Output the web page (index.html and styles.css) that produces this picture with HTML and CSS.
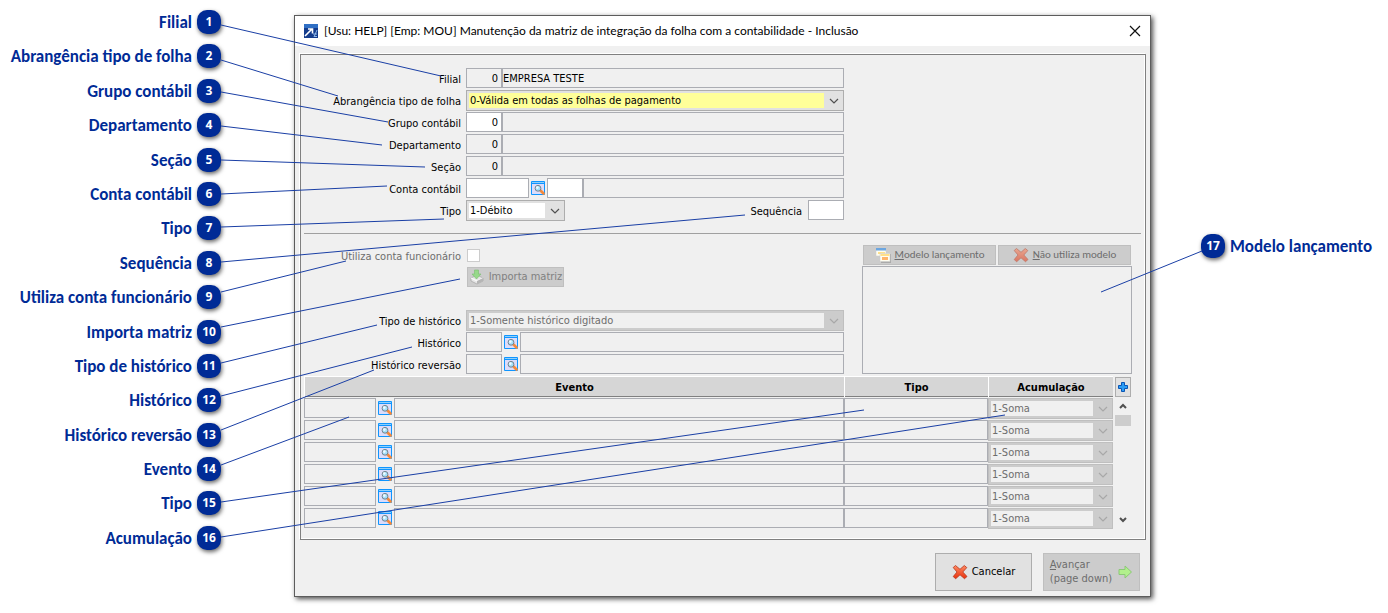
FILE: index.html
```html
<!DOCTYPE html>
<html lang="pt-BR">
<head>
<meta charset="utf-8">
<title>Manutenção da matriz de integração da folha com a contabilidade</title>
<link rel="stylesheet" href="styles.css">
</head>
<body>
<svg class="symbols" aria-hidden="true">
  <defs>
    <linearGradient id="red" x1="0" y1="0" x2="0" y2="1"><stop offset="0" stop-color="#ff8a62"/><stop offset="1" stop-color="#e8300c"/></linearGradient>
  </defs>
  <symbol id="search" viewBox="0 0 14 14">
    <rect x="0" y="0" width="14" height="14" rx="1" fill="#0f95ff"/>
    <rect x="1" y="1" width="12" height="1" fill="#8fd0fb"/>
    <rect x="1" y="3" width="12" height="10" fill="#dcdcfa"/>
    <path d="M9.500 9.500l3 3" stroke="#f58a3a" stroke-width="2.600" stroke-linecap="round"/>
    <circle cx="7" cy="7.300" r="2.900" fill="#a5e0fa" stroke="#76828c"/>
    <circle cx="6.300" cy="6.600" r="1.300" fill="#effbff"/>
  </symbol>
  <symbol id="chevron" viewBox="0 0 10 6"><path d="M1 1l4 4 4-4" fill="none" stroke="currentColor" stroke-width="1.200"/></symbol>
  <symbol id="cross" viewBox="0 0 16 16">
    <path d="M3.500 1.500L8 5.300 12.300 1.500 14.800 3.600 10.800 8 15 12.500 12.500 14.700 8 10.800 3.700 14.700 1.200 12.600 5 8 1.200 3.500z" fill="url(#red)" stroke="#b5361c" stroke-width=".8" stroke-linejoin="round"/>
  </symbol>
</svg>

<main class="stage">
  <ol class="callouts">
    <li><span>Filial</span><b>1</b></li>
    <li><span>Abrangência tipo de folha</span><b>2</b></li>
    <li><span>Grupo contábil</span><b>3</b></li>
    <li><span>Departamento</span><b>4</b></li>
    <li><span>Seção</span><b>5</b></li>
    <li><span>Conta contábil</span><b>6</b></li>
    <li><span>Tipo</span><b>7</b></li>
    <li><span>Sequência</span><b>8</b></li>
    <li><span>Utiliza conta funcionário</span><b>9</b></li>
    <li><span>Importa matriz</span><b>10</b></li>
    <li><span>Tipo de histórico</span><b>11</b></li>
    <li><span>Histórico</span><b>12</b></li>
    <li><span>Histórico reversão</span><b>13</b></li>
    <li><span>Evento</span><b>14</b></li>
    <li><span>Tipo</span><b>15</b></li>
    <li><span>Acumulação</span><b>16</b></li>
  </ol>

  <section class="dialog">
    <header class="titlebar">
      <svg class="app-icon" viewBox="0 0 14 14" aria-hidden="true">
        <rect width="14" height="14" fill="#143c8c"/><rect width="14" height="4" fill="#2f6fc4"/>
        <path d="M1 12l6.500-6.500M4 5h4.500v4.500" fill="none" stroke="#fff" stroke-width="1.600"/>
        <path d="M10 13l3-7M9 10h4M10 12.500h3" stroke="#8fb7e8" fill="none"/>
      </svg>
      <h1>[Usu: HELP] [Emp: MOU] Manutenção da matriz de integração da folha com a contabilidade - Inclusão</h1>
      <button class="close" type="button" aria-label="Fechar"><svg viewBox="0 0 12 12"><path d="M1 1l10 10M11 1L1 11" stroke="#111" stroke-width="1.200"/></svg></button>
    </header>

    <form class="body">
      <div class="panel">
        <div class="fields">
          <div class="row"><label for="filial">Filial</label><div class="line"><input id="filial" class="code num" value="0" readonly><input class="desc" value="EMPRESA TESTE" aria-label="Nome da filial" readonly></div></div>
          <div class="row"><label for="abr">Abrangência tipo de folha</label><div class="line"><div class="combo grow highlight"><select id="abr"><option>0-Válida em todas as folhas de pagamento</option></select><svg><use href="#chevron"/></svg></div></div></div>
          <div class="row"><label for="grupo">Grupo contábil</label><div class="line"><input id="grupo" class="code num edit" value="0"><input class="desc" aria-label="Nome do grupo" readonly></div></div>
          <div class="row"><label for="dep">Departamento</label><div class="line"><input id="dep" class="code num" value="0" readonly><input class="desc" aria-label="Nome do departamento" readonly></div></div>
          <div class="row"><label for="sec">Seção</label><div class="line"><input id="sec" class="code num" value="0" readonly><input class="desc" aria-label="Nome da seção" readonly></div></div>
          <div class="row"><label for="conta">Conta contábil</label><div class="line"><input id="conta" class="account edit"><button class="lookup" type="button" aria-label="Pesquisar conta"><svg><use href="#search"/></svg></button><input class="code edit" aria-label="Código reduzido"><input class="desc" aria-label="Nome da conta" readonly></div></div>
          <div class="row"><label for="tipo">Tipo</label><div class="line"><div class="combo short"><select id="tipo"><option>1-Débito</option></select><svg><use href="#chevron"/></svg></div><label class="seq" for="seq">Sequência</label><input id="seq" class="code edit"></div></div>
        </div>

        <hr>

        <div class="lower">
          <div class="fields">
            <div class="row off"><label for="func">Utiliza conta funcionário</label><div class="line"><input id="func" class="tick" type="checkbox" disabled></div></div>
            <div class="row import"><div class="line"><button class="btn" type="button" disabled>
              <svg viewBox="0 0 16 16"><path d="M2 9l6-3 6 3v3l-6 3-6-3z" fill="#e6e6e6" stroke="#a5a5a5" stroke-width=".7"/><path d="M2 9l6 3 6-3" fill="none" stroke="#fff"/><path d="M8 15v-3l6-3v3z" fill="#b5b5b5"/><path d="M5.500 1h4v4H12l-4.500 5L3 5h2.500z" fill="#97d98a" stroke="#7bbd70" stroke-width=".6"/></svg>Importa matriz</button></div></div>
            <div class="row"><label for="th">Tipo de histórico</label><div class="line"><div class="combo grow off"><select id="th" disabled><option>1-Somente histórico digitado</option></select><svg><use href="#chevron"/></svg></div></div></div>
            <div class="row"><label for="hist">Histórico</label><div class="line"><input id="hist" class="code" readonly><button class="lookup" type="button" aria-label="Pesquisar histórico"><svg><use href="#search"/></svg></button><input class="desc" aria-label="Texto do histórico" readonly></div></div>
            <div class="row"><label for="rev">Histórico reversão</label><div class="line"><input id="rev" class="code" readonly><button class="lookup" type="button" aria-label="Pesquisar histórico reversão"><svg><use href="#search"/></svg></button><input class="desc" aria-label="Texto do histórico reversão" readonly></div></div>
          </div>
          <div class="model">
            <div class="model-buttons">
              <button class="btn" type="button" disabled><svg viewBox="0 0 16 16"><rect x="6" y="7" width="10" height="9" fill="#aaa"/><rect x="1" y="1" width="10" height="8" fill="#fffdf0" stroke="#c9c9c9" stroke-width=".5"/><rect x="1" y="1" width="10" height="2.500" fill="#6ca6e0"/><rect x="3" y="5" width="7" height="2" fill="#ffe08a"/><rect x="5" y="6.500" width="10" height="8" fill="#fffdf0" stroke="#c9c9c9" stroke-width=".5"/><rect x="5.500" y="7" width="9" height="2" fill="#ffe08a"/><rect x="7" y="10" width="6" height="3" fill="#ffb46a"/></svg><span><u>M</u>odelo lançamento</span></button>
              <button class="btn" type="button" disabled><svg class="faded"><use href="#cross"/></svg><span><u>N</u>ão utiliza modelo</span></button>
            </div>
            <textarea aria-label="Modelo lançamento" readonly></textarea>
          </div>
        </div>

        <div class="events">
          <table>
            <colgroup><col><col class="c-type"><col class="c-acc"></colgroup>
            <thead><tr><th>Evento</th><th>Tipo</th><th>Acumulação</th></tr></thead>
            <tbody>
              <tr><td><div class="line"><input class="event" aria-label="Evento 1" readonly><button class="lookup" type="button" aria-label="Pesquisar evento 1"><svg><use href="#search"/></svg></button><input class="desc" aria-label="Nome do evento 1" readonly></div></td><td><input class="full" aria-label="Tipo 1" readonly></td><td><div class="combo off"><select aria-label="Acumulação 1" disabled><option>1-Soma</option></select><svg><use href="#chevron"/></svg></div></td></tr>
              <tr><td><div class="line"><input class="event" aria-label="Evento 2" readonly><button class="lookup" type="button" aria-label="Pesquisar evento 2"><svg><use href="#search"/></svg></button><input class="desc" aria-label="Nome do evento 2" readonly></div></td><td><input class="full" aria-label="Tipo 2" readonly></td><td><div class="combo off"><select aria-label="Acumulação 2" disabled><option>1-Soma</option></select><svg><use href="#chevron"/></svg></div></td></tr>
              <tr><td><div class="line"><input class="event" aria-label="Evento 3" readonly><button class="lookup" type="button" aria-label="Pesquisar evento 3"><svg><use href="#search"/></svg></button><input class="desc" aria-label="Nome do evento 3" readonly></div></td><td><input class="full" aria-label="Tipo 3" readonly></td><td><div class="combo off"><select aria-label="Acumulação 3" disabled><option>1-Soma</option></select><svg><use href="#chevron"/></svg></div></td></tr>
              <tr><td><div class="line"><input class="event" aria-label="Evento 4" readonly><button class="lookup" type="button" aria-label="Pesquisar evento 4"><svg><use href="#search"/></svg></button><input class="desc" aria-label="Nome do evento 4" readonly></div></td><td><input class="full" aria-label="Tipo 4" readonly></td><td><div class="combo off"><select aria-label="Acumulação 4" disabled><option>1-Soma</option></select><svg><use href="#chevron"/></svg></div></td></tr>
              <tr><td><div class="line"><input class="event" aria-label="Evento 5" readonly><button class="lookup" type="button" aria-label="Pesquisar evento 5"><svg><use href="#search"/></svg></button><input class="desc" aria-label="Nome do evento 5" readonly></div></td><td><input class="full" aria-label="Tipo 5" readonly></td><td><div class="combo off"><select aria-label="Acumulação 5" disabled><option>1-Soma</option></select><svg><use href="#chevron"/></svg></div></td></tr>
              <tr><td><div class="line"><input class="event" aria-label="Evento 6" readonly><button class="lookup" type="button" aria-label="Pesquisar evento 6"><svg><use href="#search"/></svg></button><input class="desc" aria-label="Nome do evento 6" readonly></div></td><td><input class="full" aria-label="Tipo 6" readonly></td><td><div class="combo off"><select aria-label="Acumulação 6" disabled><option>1-Soma</option></select><svg><use href="#chevron"/></svg></div></td></tr>
            </tbody>
          </table>
          <div class="rail">
            <button class="add" type="button" aria-label="Adicionar"><svg viewBox="0 0 10 10"><path d="M3.500 .5h3v3h3v3h-3v3h-3v-3h-3v-3h3z" fill="#2b9df4" stroke="#0a55b5"/></svg></button>
            <div class="scroll">
              <button type="button" aria-label="Subir"><svg viewBox="0 0 8 6"><path d="M1 5l3-3 3 3" fill="none" stroke="#505050" stroke-width="2"/></svg></button>
              <i class="thumb"></i>
              <button class="down" type="button" aria-label="Descer"><svg viewBox="0 0 8 6"><path d="M1 1l3 3 3-3" fill="none" stroke="#505050" stroke-width="2"/></svg></button>
            </div>
          </div>
        </div>
      </div>

      <footer class="actions">
        <button class="btn big active" type="button"><svg><use href="#cross"/></svg>Cancelar</button>
        <button class="btn big next" type="button" disabled><span><u>A</u>vançar<br>(page down)</span><svg viewBox="0 0 16 16"><path d="M2 5.500h6V2l6.500 6L8 14v-3.500H2z" fill="#b2f08c" stroke="#8cc878"/></svg></button>
      </footer>
    </form>
  </section>

  <ol class="callouts-right" start="17">
    <li><b>17</b><span>Modelo lançamento</span></li>
  </ol>

  <svg class="leaders" viewBox="0 0 1388 613" preserveAspectRatio="none" aria-hidden="true">
    <path d="M221 25L441 76M221 60L338 96M221 92L388 122M221 126L382 145M221 160L425 167M221 194L387 186M221 227L444 219M221 262L745 215M221 292L346 261M221 327L460 279M221 363L377 325M221 396L412 347M221 430L374 370M221 465L349 417M221 502L864 410M221 537L1005 415M1202 251L1101 292"/>
  </svg>
</main>
</body>
</html>
```

FILE: styles.css
```css
* { box-sizing: border-box; }

body {
  margin: 0;
  background: #fff;
  font: 11px/14px "DejaVu Sans Condensed", "DejaVu Sans", sans-serif;
  color: #000;
}

.symbols { position: absolute; width: 0; height: 0; }

.stage {
  position: relative;
  display: grid;
  grid-template-columns: 294px minmax(0, 1fr) 237px;
}

/* Callouts */
.callouts, .callouts-right {
  list-style: none;
  margin: 0;
  padding: 0;
  color: #002b96;
  font: bold 17px/26px Carlito, Lato, sans-serif;
}

.callouts {
  display: flex;
  flex-direction: column;
  justify-content: space-between;
  padding: 10px 73px 61px 0;
}

.callouts li { display: flex; justify-content: flex-end; gap: 5px; white-space: nowrap; }
.callouts-right { padding: 234px 0 0 50px; }
.callouts-right li { display: flex; gap: 5px; white-space: nowrap; }

.callouts b, .callouts-right b {
  width: 24px;
  height: 24px;
  border-radius: 10px;
  background: #002b96;
  box-shadow: 1px 2px 4px rgba(0, 0, 0, .6);
  color: #fff;
  font: bold 12px/24px "Open Sans", sans-serif;
  text-align: center;
}

.leaders {
  position: absolute;
  inset: 0;
  width: 100%;
  height: 100%;
  pointer-events: none;
  fill: none;
  stroke: #1a3fa5;
  stroke-width: 1;
}

/* Window */
.dialog {
  margin: 15px 0 16px;
  border: 1px solid #5c5c5c;
  background: #f0f0f0;
  box-shadow: 2px 2px 5px rgba(0, 0, 0, .7);
}

.titlebar {
  display: flex;
  align-items: center;
  gap: 6px;
  height: 30px;
  padding: 0 9px;
  background: #fff;
}

.titlebar h1 {
  flex: 1;
  margin: 0;
  font: 12px/16px Lato, "Open Sans", sans-serif;
  white-space: nowrap;
}

.app-icon { width: 14px; height: 14px; }
.close { width: 12px; height: 12px; padding: 0; border: 0; background: none; }
.close svg { display: block; width: 12px; height: 12px; }

.body { padding: 8px 4px 5px 5px; }

.panel {
  border: 1px solid #808080;
  box-shadow: -1px -1px #fff, inset -1px -1px #fff;
  padding: 13px 4px 10px 3px;
}

.panel hr {
  height: 1px;
  margin: 11px 0;
  border: 0;
  background: #a0a0a0;
}

/* Form rows */
.fields { flex: 1; min-width: 0; }
.panel > .fields { margin-right: 297px; }

.row {
  display: grid;
  grid-template-columns: 157px minmax(0, 1fr);
  column-gap: 5px;
  height: 22px;
}

.row > label, .seq { padding-top: 5px; text-align: right; white-space: nowrap; }
.row.off > label { color: #6d6d6d; }
.row.import { grid-template-columns: minmax(0, 1fr); height: 43px; padding-left: 163px; }
.import .btn { width: 97px; }
.seq { margin-left: auto; padding-right: 6px; }

.line { display: flex; align-items: flex-start; }

input, textarea {
  min-width: 0;
  height: 20px;
  margin: 0;
  padding: 0;
  border: 1px solid #abadb3;
  border-radius: 0;
  outline: 0;
  background: #f0f0f0;
  font: inherit;
  color: #000;
}

.edit { background: #fff; }
.code { width: 36px; }
.account { width: 63px; }
.event { width: 72px; }
.full { display: block; width: 100%; }
.desc { flex: 1; }
.num { padding-right: 3px; text-align: right; }

.tick {
  appearance: none;
  width: 13px;
  height: 13px;
  margin: 4px 0 0 1px;
  border-color: #ccc;
  background: #fff;
}

.lookup { width: 14px; height: 14px; margin: 3px 2px 0; padding: 0; border: 0; background: none; }
.lookup svg { display: block; width: 14px; height: 14px; }

.combo {
  display: flex;
  align-items: center;
  height: 21px;
  padding: 2px 4px 2px 2px;
  border: 1px solid #adadad;
  background: #e1e1e1;
  color: #505050;
}

.combo select {
  appearance: none;
  flex: 1;
  min-width: 0;
  height: 15px;
  margin-right: 5px;
  padding: 1px 0 0 1px;
  border: 0;
  border-radius: 0;
  background: #fff;
  font: inherit;
  color: #000;
}

.combo svg { width: 10px; height: 6px; }
.combo.grow { flex: 1; }
.combo.short { width: 99px; }
.combo.highlight select { background: #ff9; }
.combo.off { border-color: #bfbfbf; background: #ccc; color: #a8a8a8; }
.combo.off select { background: #f0f0f0; color: #6d6d6d; opacity: 1; }

/* Buttons */
.btn {
  display: flex;
  align-items: center;
  justify-content: center;
  gap: 4px;
  height: 20px;
  padding: 0;
  border: 1px solid #bfbfbf;
  background: #ccc;
  font: inherit;
  color: #808080;
  white-space: nowrap;
}

.btn svg { width: 16px; height: 16px; }
.faded { opacity: .55; }

/* Entry model */
.lower { display: flex; }
.model { display: flex; flex-direction: column; width: 270px; margin: 0 9px 2px 18px; }
.model-buttons { display: flex; gap: 2px; padding: 0 1px 1px; }
.model-buttons .btn { flex: 1; color: #6d6d6d; font-family: Carlito, Lato, sans-serif; }
.model textarea { flex: 1; resize: none; }

/* Events grid */
.events { display: flex; gap: 2px; padding-right: 10px; }

table { flex: 1; table-layout: fixed; border-collapse: separate; border-spacing: 0; }
.c-type { width: 144px; }
.c-acc { width: 125px; }

th {
  height: 21px;
  padding: 1px 0 0;
  border: solid #fff;
  border-width: 1px 0 0 1px;
  background: #d6d6d6;
  box-shadow: inset 0 -1px #808080;
  font-weight: bold;
}

td { height: 22px; padding: 1px 0 0; vertical-align: top; }

.rail { display: flex; flex-direction: column; width: 16px; }

.add { height: 20px; margin-top: 1px; padding: 0; border: 1px solid #adadad; background: #e1e1e1; }
.add svg { display: block; width: 10px; height: 10px; margin: auto; }

.scroll { display: flex; flex: 1; flex-direction: column; }
.scroll button { height: 18px; padding: 0; border: 0; background: none; }
.scroll svg { display: block; width: 8px; height: 6px; margin: auto; }
.thumb { height: 11px; background: #cdcdcd; }
.scroll .down { margin-top: auto; }

/* Footer */
.actions { display: flex; justify-content: flex-end; gap: 11px; padding: 13px 6px 0 0; }
.big { width: 97px; height: 38px; }
.big.active { border-color: #adadad; background: #e1e1e1; color: #000; }
.next { gap: 5px; color: #6d6d6d; text-align: left; }
```
